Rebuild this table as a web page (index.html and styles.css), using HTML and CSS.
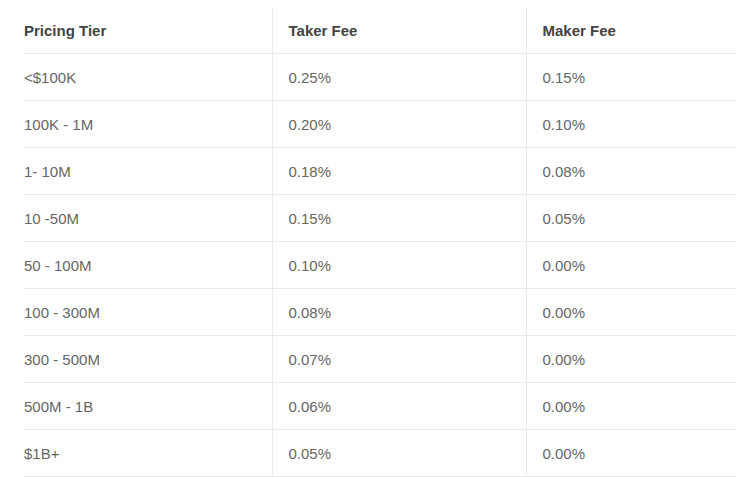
FILE: index.html
```html
<!DOCTYPE html>
<html>
<head>
<meta charset="utf-8">
<link rel="stylesheet" href="styles.css">
</head>
<body>
<div class="wrap">
<table class="fees">
  <colgroup>
    <col class="c1"><col class="c2"><col class="c3">
  </colgroup>
  <thead>
    <tr><th>Pricing Tier</th><th>Taker Fee</th><th>Maker Fee</th></tr>
  </thead>
  <tbody>
    <tr><td>&lt;$100K</td><td>0.25%</td><td>0.15%</td></tr>
    <tr><td>100K - 1M</td><td>0.20%</td><td>0.10%</td></tr>
    <tr><td>1- 10M</td><td>0.18%</td><td>0.08%</td></tr>
    <tr><td>10 -50M</td><td>0.15%</td><td>0.05%</td></tr>
    <tr><td>50 - 100M</td><td>0.10%</td><td>0.00%</td></tr>
    <tr><td>100 - 300M</td><td>0.08%</td><td>0.00%</td></tr>
    <tr><td>300 - 500M</td><td>0.07%</td><td>0.00%</td></tr>
    <tr><td>500M - 1B</td><td>0.06%</td><td>0.00%</td></tr>
    <tr><td>$1B+</td><td>0.05%</td><td>0.00%</td></tr>
  </tbody>
</table>
</div>
</body>
</html>
```
FILE: styles.css
```css
html, body {
  margin: 0;
  padding: 0;
  background: #fff;
}
.wrap {
  padding: 8px 0 0 24px;
}
.fees {
  border-collapse: collapse;
  table-layout: fixed;
  width: 712px;
  font-family: "Liberation Sans", Arial, sans-serif;
  font-size: 15px;
}
.c1 { width: 248px; }
.c2 { width: 254px; }
.c3 { width: 210px; }
.fees th, .fees td {
  text-align: left;
  vertical-align: middle;
  padding: 0 16px;
  border-bottom: 1px solid #ebebeb;
  border-left: 1px solid #ebebeb;
}
.fees th:first-child, .fees td:first-child {
  border-left: none;
  padding-left: 0;
}
.fees th {
  height: 45px;
  color: #444;
  font-weight: bold;
}
.fees td {
  height: 46px;
  color: #666;
}
```
